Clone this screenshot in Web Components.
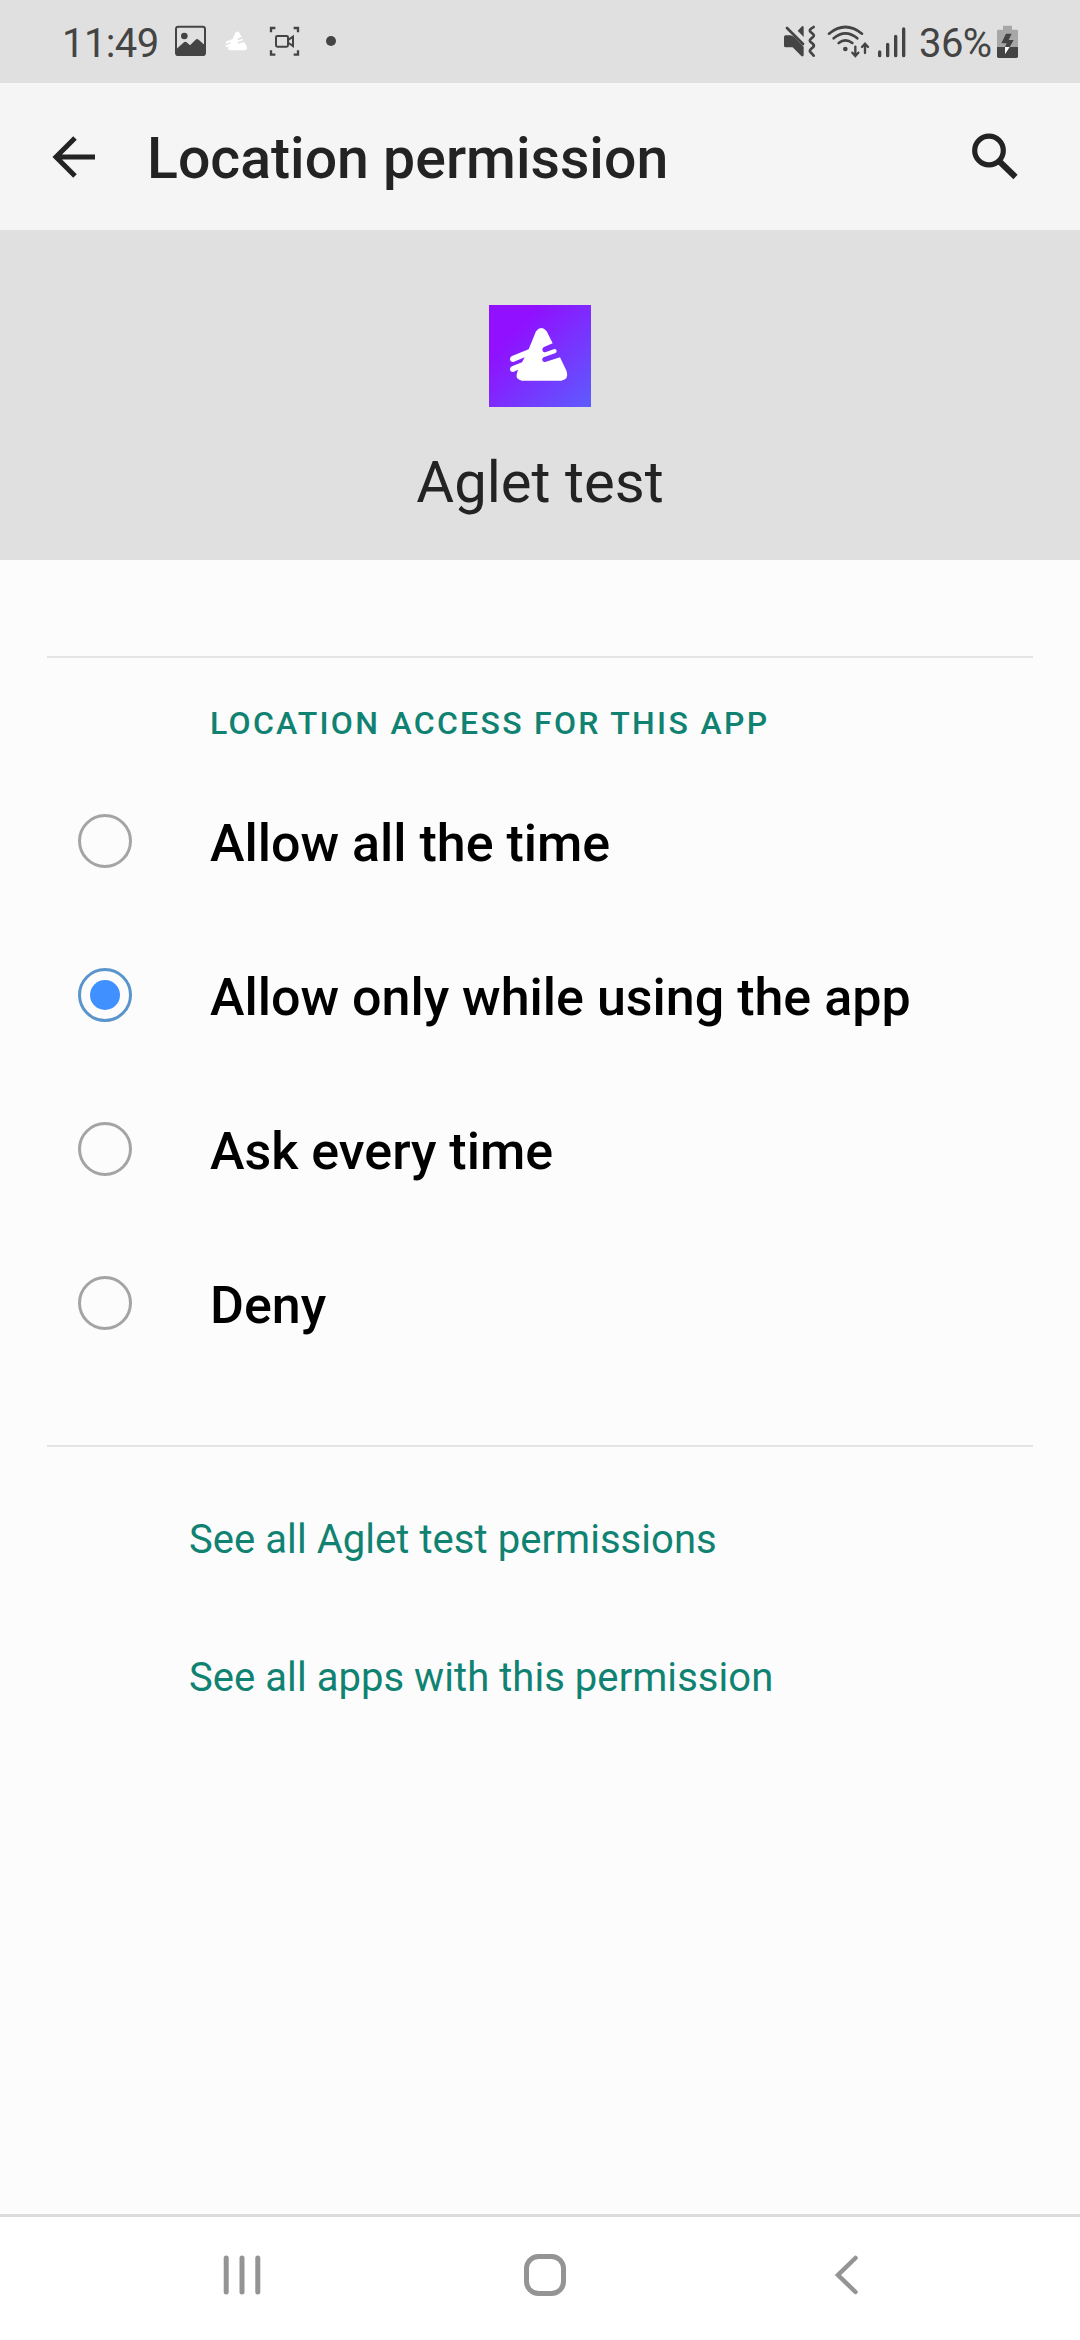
<!DOCTYPE html>
<html lang="en">
<head>
<meta charset="utf-8">
<title>Location permission</title>
<style>
    body {
        margin: 0;
        background: #fcfcfc;
        font-family: Roboto, sans-serif;
    }
</style>
</head>
<body>
<phone-screen>
    <status-bar slot="top" time="11:49" battery="36%"></status-bar>
    <app-bar slot="top">Location permission</app-bar>
    <app-header slot="top">Aglet test</app-header>
    <option-group label="Location access for this app">
        <radio-option>Allow all the time</radio-option>
        <radio-option checked>Allow only while using the app</radio-option>
        <radio-option>Ask every time</radio-option>
        <radio-option>Deny</radio-option>
    </option-group>
    <permission-link>See all Aglet test permissions</permission-link>
    <permission-link>See all apps with this permission</permission-link>
    <nav-bar slot="bottom"></nav-bar>
</phone-screen>

<script>
// the triangle logo, used in the status bar and in the header
const logoPath = 'M408 124 Q424 104 440 124 L458 160 L432 171 Q425 175 428 183 Q431 188 438 186 L463 177 Q470 177 470 183 Q470 188 465 190 L431 202 Q424 207 428 213 Q431 217 438 215 L480 202 L500 244 Q507 269 484 272 L366 272 Q347 269 350 253 L354 239 L340 246 Q330 246 330 238 Q330 232 336 229 L366 217 L374 202 L340 216 Q330 216 330 207 Q330 201 336 198 L386 178 Z'

class BaseComponent extends HTMLElement {
    constructor() {
        super();
        this.attachShadow({mode: 'open'});
    }
    connectedCallback() {
        this.shadowRoot.innerHTML = this.render()
    }
}

class PhoneScreen extends BaseComponent {
    render() {
        return `<style>
                    :host {
                        display: flex;
                        flex-direction: column;
                        width: 1080px;
                        height: 2340px;
                        overflow: hidden;
                        background: #fcfcfc;
                    }
                    main {
                        flex: 1;
                        padding-top: 96px;
                    }
                </style>
                <slot name="top"></slot>
                <main><slot></slot></main>
                <slot name="bottom"></slot>`
    }
}

class StatusBar extends BaseComponent {
    render() {
        return `<style>
                    :host {
                        display: flex;
                        justify-content: space-between;
                        box-sizing: border-box;
                        height: 83px;
                        padding: 0 56px 0 62px;
                        background: #e0e0e0;
                        color: #444;
                        font-size: 40px;
                        line-height: 87px;
                    }
                    div {
                        display: flex;
                    }
                    .time {
                        width: 109px;
                        letter-spacing: -0.6px;
                    }
                    .battery {
                        width: 75px;
                        letter-spacing: -0.6px;
                    }
                    svg {
                        display: block;
                        height: 83px;
                        fill: none;
                        stroke: #444;
                        stroke-linecap: round;
                    }
                    .solid {
                        fill: #444;
                        stroke: none;
                    }
                </style>
                <div>
                    <span class="time">${this.getAttribute('time')}</span>
                    <svg width="40" viewBox="393 0 120 249">
                        <rect x="408" y="80" width="87" height="85" rx="7" stroke-width="6"/>
                        <circle class="solid" cx="433" cy="108" r="10"/>
                        <path class="solid" d="M410 146 L432 127 Q436 124 440 127 L450 136 L466 120 Q471 115 476 119 L493 134 V164 H410 Z"/>
                    </svg>
                    <svg width="50" viewBox="513 0 150 249">
                        <g transform="translate(433 54) scale(.375 .355)"><path d="${logoPath}" fill="#fff" stroke="none"/></g>
                    </svg>
                    <svg width="50" viewBox="663 0 150 249">
                        <path d="M693 97 V84 H706 M761 84 H774 V97 M774 151 V164 H761 M706 164 H693 V151" stroke-width="7" stroke-linecap="butt"/>
                        <rect x="708" y="108" width="36" height="32" rx="4" stroke-width="6"/>
                        <path d="M746 119 L759 110 V138 L746 129" stroke-width="6"/>
                    </svg>
                    <svg width="40" viewBox="813 0 120 249">
                        <circle class="solid" cx="873" cy="123" r="15"/>
                    </svg>
                </div>
                <div>
                    <svg width="40" viewBox="66 0 120 249">
                        <path class="solid" d="M77 106 H92 L102 110 L131 140 V165 Q130 172 124 168 L98 142 H77 Q72 142 72 137 V111 Q72 106 77 106 Z M113 92 L126 79 Q131 76 131 83 V111 Z"/>
                        <path d="M81 84 L129 132" stroke-width="8"/>
                        <path d="M161 81 L152 87 Q147 91 152 96 L159 102 Q164 106 159 111 L152 117 Q147 121 152 126 L159 132 Q164 137 159 142 L152 148 Q147 153 152 157 L161 167" stroke-width="8"/>
                    </svg>
                    <svg width="52" viewBox="186 0 156 249">
                        <path d="M207 101 Q256 61 306 101 M221 115 Q256 85 292 115 M236 129 Q256 113 277 129" stroke-width="8"/>
                        <circle class="solid" cx="256" cy="147" r="7"/>
                        <path d="M286 140 V167 M277 158 L286 168 L295 158 M315 159 V132 M306 141 L315 131 L324 141" stroke-width="7"/>
                    </svg>
                    <svg width="45" viewBox="342 0 135 249">
                        <path d="M359 156 V167 M383 133 V167 M407 109 V167 M431 87 V167" stroke-width="10"/>
                    </svg>
                    <span class="battery">${this.getAttribute('battery')}</span>
                    <svg width="30" viewBox="702 0 90 249">
                        <path fill="#a7a7a7" stroke="none" d="M729 77 H756 V89 H770 Q774 89 774 93 V141 H711 V93 Q711 89 715 89 H729 Z"/>
                        <path class="solid" d="M711 141 H774 V169 Q774 174 769 174 H716 Q711 174 711 169 Z"/>
                        <path class="solid" d="M738 101 H755 L746 120 H761 L749 141 H735 L740 130 H724 Z"/>
                        <path fill="#fff" stroke="none" d="M735 141 H749 L735 163 Z"/>
                    </svg>
                </div>`
    }
}

class AppBar extends BaseComponent {
    render() {
        return `<style>
                    :host {
                        display: flex;
                        align-items: center;
                        box-sizing: border-box;
                        height: 147px;
                        padding: 0 60px 0 50px;
                        background: #f5f5f5;
                        color: #232323;
                    }
                    h1 {
                        flex: 1;
                        margin: 5px 0 0 49px;
                        font-size: 57.2px;
                        font-weight: 500;
                        line-height: 70px;
                    }
                    svg {
                        display: block;
                        fill: none;
                        stroke: #232323;
                    }
                </style>
                <svg width="48" height="48" viewBox="0 0 48 48"><path d="M45 24 H7 M25 5 L6 24 L25 43" stroke-width="5"/></svg>
                <h1><slot></slot></h1>
                <svg width="50" height="50" viewBox="970 131 50 50"><circle cx="989" cy="149.500" r="14.300" stroke-width="5.200"/><path d="M999 160 L1015.500 176" stroke-width="6"/></svg>`
    }
}

class AppHeader extends BaseComponent {
    render() {
        return `<style>
                    :host {
                        display: flex;
                        flex-direction: column;
                        align-items: center;
                        box-sizing: border-box;
                        height: 330px;
                        padding-top: 75px;
                        background: #e0e0e0;
                        color: #232323;
                        font-size: 58px;
                        line-height: 70px;
                    }
                    svg {
                        display: block;
                        margin-bottom: 40px;
                    }
                </style>
                <svg width="102" height="102" viewBox="267 45 306 306">
                    <defs>
                        <linearGradient id="fill" x1="0" y1="0" x2="1" y2="1">
                            <stop offset=".25" stop-color="#9010ff"/>
                            <stop offset="1" stop-color="#5d5cff"/>
                        </linearGradient>
                    </defs>
                    <rect x="267" y="45" width="306" height="306" fill="url(#fill)"/>
                    <path d="${logoPath}" fill="#fff"/>
                </svg>
                <slot></slot>`
    }
}

class OptionGroup extends BaseComponent {
    render() {
        return `<style>
                    :host {
                        display: block;
                        margin: 0 47px 23px;
                        border-top: 2px solid #e4e4e4;
                        border-bottom: 2px solid #e4e4e4;
                        padding: 45px 0 65px;
                    }
                    h2 {
                        margin: 0 0 21px 163px;
                        color: #108272;
                        font-size: 32px;
                        font-weight: 500;
                        line-height: 40px;
                        letter-spacing: 2.3px;
                        text-transform: uppercase;
                    }
                </style>
                <h2>${this.getAttribute('label')}</h2>
                <slot></slot>`
    }
}

class RadioOption extends BaseComponent {
    render() {
        return `<style>
                    :host {
                        display: flex;
                        align-items: center;
                        gap: 78px;
                        height: 154px;
                        padding-left: 31px;
                        color: #000;
                        font-size: 52px;
                        font-weight: 500;
                    }
                    .circle {
                        display: flex;
                        align-items: center;
                        justify-content: center;
                        box-sizing: border-box;
                        width: 54px;
                        height: 54px;
                        border: 3px solid #a4a4a4;
                        border-radius: 50%;
                    }
                    :host([checked]) .circle {
                        border-color: #5a94cc;
                    }
                    :host([checked]) .circle::after {
                        content: "";
                        width: 30px;
                        height: 30px;
                        border-radius: 50%;
                        background: #4090ff;
                    }
                    .label {
                        padding-top: 4px;
                    }
                </style>
                <span class="circle"></span>
                <span class="label"><slot></slot></span>`
    }
}

class PermissionLink extends BaseComponent {
    render() {
        return `<style>
                    :host {
                        display: flex;
                        align-items: center;
                        height: 138px;
                        padding-left: 189px;
                        color: #108272;
                        font-size: 40px;
                        letter-spacing: 0.05px;
                    }
                </style>
                <slot></slot>`
    }
}

class NavBar extends BaseComponent {
    render() {
        return `<style>
                    :host {
                        display: flex;
                        justify-content: space-between;
                        box-sizing: border-box;
                        height: 126px;
                        padding: 31px 208px 0 217px;
                        border-top: 3px solid #dcdcdc;
                        background: #fff;
                    }
                    svg {
                        display: block;
                        fill: none;
                        stroke: #949494;
                        stroke-width: 5;
                        stroke-linecap: round;
                    }
                </style>
                <svg width="50" height="54" viewBox="217 2248 50 54"><path d="M226.200 2258 V2292 M242 2258 V2292 M257.800 2258 V2292"/></svg>
                <svg width="54" height="54" viewBox="517 2248 54 54"><rect x="525.500" y="2256.500" width="37" height="37" rx="12"/></svg>
                <svg width="50" height="54" viewBox="822 2248 50 54"><path d="M855.500 2258 L838 2275 L855.500 2292" stroke-width="4.500"/></svg>`
    }
}

window.customElements.define('phone-screen', PhoneScreen)
window.customElements.define('status-bar', StatusBar)
window.customElements.define('app-bar', AppBar)
window.customElements.define('app-header', AppHeader)
window.customElements.define('option-group', OptionGroup)
window.customElements.define('radio-option', RadioOption)
window.customElements.define('permission-link', PermissionLink)
window.customElements.define('nav-bar', NavBar)
</script>
</body>
</html>
